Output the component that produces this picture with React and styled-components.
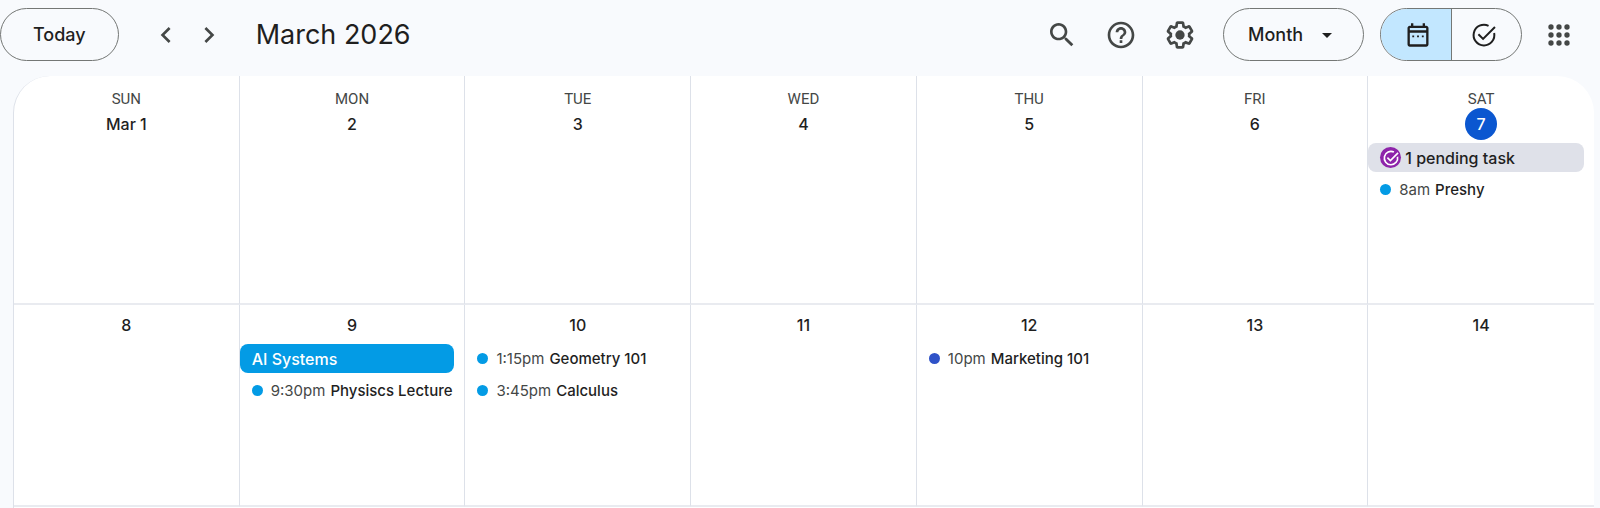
import React, { useState } from "react";
import styled, { createGlobalStyle } from "styled-components";

const weekdays = ["SUN", "MON", "TUE", "WED", "THU", "FRI", "SAT"];

const weeks = [
  [
    { id: 1, label: "Mar 1" },
    { id: 2, label: "2" },
    { id: 3, label: "3" },
    { id: 4, label: "4" },
    { id: 5, label: "5" },
    { id: 6, label: "6" },
    {
      id: 7,
      label: "7",
      today: true,
      tasks: "1 pending task",
      events: [{ time: "8am", title: "Preshy" }],
    },
  ],
  [
    { id: 8, label: "8" },
    {
      id: 9,
      label: "9",
      allDay: "AI Systems",
      events: [{ time: "9:30pm", title: "Physiscs Lecture" }],
    },
    {
      id: 10,
      label: "10",
      events: [
        { time: "1:15pm", title: "Geometry 101" },
        { time: "3:45pm", title: "Calculus" },
      ],
    },
    { id: 11, label: "11" },
    {
      id: 12,
      label: "12",
      events: [{ time: "10pm", title: "Marketing 101", color: "#2f52c8" }],
    },
    { id: 13, label: "13" },
    { id: 14, label: "14" },
  ],
];

function Icon({ size = 32, children }) {
  return (
    <svg
      width={size}
      height={size}
      viewBox="0 0 24 24"
      fill="currentColor"
      aria-hidden="true"
    >
      {children}
    </svg>
  );
}

function TaskMark({ size, weight = 1.7 }) {
  return (
    <Icon size={size}>
      <g fill="none" stroke="currentColor" strokeWidth={weight}>
        <path d="M15.9 4.1A8.9 8.9 0 1 0 20.7 10.3" />
        <path d="M7.2 11.4l4 4L21.4 5.2" />
      </g>
    </Icon>
  );
}

function Toolbar() {
  const [view, setView] = useState("month");
  const [mode, setMode] = useState("calendar");
  return (
    <Header>
      <TodayButton type="button">Today</TodayButton>
      <Arrows>
        <IconButton type="button" aria-label="Previous month">
          <Icon>
            <path d="M15.41 7.41L14 6l-6 6 6 6 1.41-1.41L10.83 12z" />
          </Icon>
        </IconButton>
        <IconButton type="button" aria-label="Next month">
          <Icon>
            <path d="M10 6L8.59 7.41 13.17 12l-4.58 4.59L10 18l6-6z" />
          </Icon>
        </IconButton>
      </Arrows>
      <Title>March 2026</Title>
      <Tools>
        <IconButton type="button" aria-label="Search">
          <Icon>
            <path d="M15.5 14h-.79l-.28-.27C15.41 12.59 16 11.11 16 9.5 16 5.91 13.09 3 9.5 3S3 5.91 3 9.5 5.91 16 9.5 16c1.61 0 3.09-.59 4.23-1.57l.27.28v.79l5 4.99L20.49 19l-4.99-5zm-6 0C7.01 14 5 11.99 5 9.5S7.01 5 9.5 5 14 7.01 14 9.5 11.99 14 9.5 14z" />
          </Icon>
        </IconButton>
        <IconButton type="button" aria-label="Support">
          <Icon>
            <path d="M11 18h2v-2h-2v2zm1-16C6.48 2 2 6.48 2 12s4.48 10 10 10 10-4.48 10-10S17.52 2 12 2zm0 18c-4.41 0-8-3.59-8-8s3.59-8 8-8 8 3.59 8 8-3.59 8-8 8zm0-14c-2.21 0-4 1.79-4 4h2c0-1.1.9-2 2-2s2 .9 2 2c0 2-3 1.75-3 5h2c0-2.25 3-2.5 3-5 0-2.21-1.79-4-4-4z" />
          </Icon>
        </IconButton>
        <IconButton type="button" aria-label="Settings">
          <Icon>
            <path d="M13.85 22.25h-3.7c-.74 0-1.36-.54-1.45-1.27l-.27-1.89c-.27-.14-.53-.29-.79-.46l-1.8.72c-.7.26-1.47-.03-1.81-.65L2.2 15.53c-.35-.66-.2-1.44.36-1.88l1.53-1.19c-.01-.15-.02-.3-.02-.46 0-.15.01-.31.02-.46l-1.52-1.19c-.59-.45-.74-1.26-.37-1.88l1.85-3.19c.34-.62 1.11-.9 1.79-.63l1.81.73c.26-.17.52-.32.78-.46l.27-1.91c.09-.7.71-1.25 1.44-1.25h3.7c.74 0 1.36.54 1.45 1.27l.27 1.89c.27.14.53.29.79.46l1.8-.72c.71-.26 1.48.03 1.82.65l1.84 3.18c.36.66.2 1.44-.36 1.88l-1.52 1.19c.01.15.02.3.02.46s-.01.31-.02.46l1.52 1.19c.56.45.72 1.23.37 1.86l-1.86 3.22c-.34.62-1.11.9-1.8.63l-1.8-.72c-.26.17-.52.32-.78.46l-.27 1.91c-.1.68-.72 1.22-1.46 1.22zm-3.23-2h2.76l.37-2.55.53-.22c.44-.18.88-.44 1.34-.78l.45-.34 2.38.96 1.38-2.4-2.03-1.58.07-.56c.03-.26.06-.51.06-.78s-.03-.53-.06-.78l-.07-.56 2.03-1.58-1.39-2.4-2.39.96-.45-.35c-.42-.32-.87-.58-1.33-.77l-.52-.22-.37-2.55h-2.76l-.37 2.55-.53.21c-.44.19-.88.44-1.34.79l-.45.33-2.38-.95-1.39 2.39 2.03 1.58-.07.56a7 7 0 0 0-.06.79c0 .26.02.53.06.78l.07.56-2.03 1.58 1.38 2.4 2.39-.96.45.35c.43.33.86.58 1.33.77l.53.22.38 2.55z" />
            <circle cx="12" cy="12" r="3.5" />
          </Icon>
        </IconButton>
      </Tools>
      <ViewPicker>
        <select
          aria-label="View"
          value={view}
          onChange={(e) => setView(e.target.value)}
        >
          <option value="day">Day</option>
          <option value="week">Week</option>
          <option value="month">Month</option>
          <option value="year">Year</option>
        </select>
        <Icon size={24}>
          <path d="M7 10l5 5 5-5z" />
        </Icon>
      </ViewPicker>
      <ModeSwitch>
        <ModeButton
          type="button"
          aria-label="Calendar"
          aria-pressed={mode === "calendar"}
          $active={mode === "calendar"}
          onClick={() => setMode("calendar")}
        >
          <Icon size={28}>
            <path d="M19 4h-1V2h-2v2H8V2H6v2H5c-1.11 0-2 .9-2 2v14c0 1.1.89 2 2 2h14c1.1 0 2-.9 2-2V6c0-1.1-.9-2-2-2zm0 16H5V10h14v10zm0-12H5V6h14v2zM8.7 14H7.1v-1.6h1.6V14zm4.1 0h-1.6v-1.6h1.6V14zm4.1 0h-1.6v-1.6h1.6V14z" />
          </Icon>
        </ModeButton>
        <ModeButton
          type="button"
          aria-label="Tasks"
          aria-pressed={mode === "tasks"}
          $active={mode === "tasks"}
          onClick={() => setMode("tasks")}
        >
          <TaskMark size={28} />
        </ModeButton>
      </ModeSwitch>
      <IconButton type="button" aria-label="Apps">
        <Icon>
          {[6, 12, 18].map((y) =>
            [6, 12, 18].map((x) => (
              <circle key={`${x}-${y}`} cx={x} cy={y} r="2" />
            ))
          )}
        </Icon>
      </IconButton>
    </Header>
  );
}

function Day({ day }) {
  const { label, today, tasks, allDay, events = [] } = day;
  return (
    <>
      <DayNumber $today={today}>
        <span>{label}</span>
      </DayNumber>
      <Events>
        {tasks && (
          <Chip type="button" $tasks>
            <TaskBadge>
              <TaskMark size={18} weight={2.2} />
            </TaskBadge>
            {tasks}
          </Chip>
        )}
        {allDay && <Chip type="button">{allDay}</Chip>}
        {events.map((event) => (
          <EventButton type="button" key={event.title}>
            <Dot $color={event.color} />
            <EventText>
              <time>{event.time}</time> {event.title}
            </EventText>
          </EventButton>
        ))}
      </Events>
    </>
  );
}

export default function App() {
  return (
    <Page>
      <GlobalStyle />
      <Toolbar />
      <Board>
        <Month aria-label="March 2026">
          <thead>
            <tr>
              {weekdays.map((name) => (
                <th key={name} scope="col">
                  {name}
                </th>
              ))}
            </tr>
          </thead>
          <tbody>
            {weeks.map((week) => (
              <tr key={week[0].id}>
                {week.map((day) => (
                  <td key={day.id}>
                    <Day day={day} />
                  </td>
                ))}
              </tr>
            ))}
          </tbody>
        </Month>
      </Board>
    </Page>
  );
}

const GlobalStyle = createGlobalStyle`
  * {
    box-sizing: border-box;
  }
  body {
    margin: 0;
    background-color: #f8fafd;
    color: #1f1f1f;
    font-family: Inter, Roboto, "Liberation Sans", sans-serif;
  }
  button,
  select {
    margin: 0;
    padding: 0;
    border: none;
    background: none;
    color: inherit;
    font: inherit;
    cursor: pointer;
  }
`;

const Page = styled.div`
  display: flex;
  flex-direction: column;
  min-height: 100vh;
`;

const Header = styled.header`
  display: flex;
  align-items: center;
  padding: 8px 25px 15px 0;
`;

const TodayButton = styled.button`
  height: 53px;
  padding: 0 32px;
  border: 1px solid #747775;
  border-radius: 27px;
  font-size: 18px;
  font-weight: 500;
`;

const IconButton = styled.button`
  display: flex;
  color: #444746;
`;

const Arrows = styled.div`
  display: flex;
  gap: 11px;
  margin: 0 31px;
`;

const Title = styled.h1`
  margin: 0;
  font-size: 27px;
  font-weight: 400;
  line-height: 36px;
`;

const Tools = styled.div`
  display: flex;
  gap: 27px;
  margin: 0 27px 0 auto;
`;

const ViewPicker = styled.div`
  display: grid;
  align-items: center;
  margin-right: 16px;
  select {
    grid-area: 1 / 1;
    width: 141px;
    height: 53px;
    padding: 0 48px 0 24px;
    border: 1px solid #747775;
    border-radius: 27px;
    appearance: none;
    font-size: 18px;
    font-weight: 500;
  }
  svg {
    grid-area: 1 / 1;
    justify-self: end;
    margin-right: 25px;
    pointer-events: none;
  }
`;

const ModeSwitch = styled.div`
  display: flex;
  width: 142px;
  height: 53px;
  margin-right: 21px;
  border: 1px solid #747775;
  border-radius: 27px;
  overflow: hidden;
`;

const ModeButton = styled.button`
  display: flex;
  flex: 1;
  align-items: center;
  justify-content: center;
  padding-left: 4px;
  background-color: ${({ $active }) => ($active ? "#c2e7ff" : "transparent")};
  & + & {
    padding: 0 4px 0 0;
    border-left: 1px solid #747775;
  }
`;

const Board = styled.main`
  flex: 1;
  margin: 0 6px 0 13px;
  border-left: 1px solid #dde1e9;
  border-radius: 37px 37px 0 0;
  background-color: #ffffff;
  overflow: hidden;
`;

const Month = styled.table`
  width: 100%;
  table-layout: fixed;
  border-spacing: 0;
  th,
  td {
    padding: 0;
    border-right: 1px solid #dde1e9;
    vertical-align: top;
  }
  th {
    padding-top: 14px;
    color: #444746;
    font-family: Roboto, sans-serif;
    font-size: 15px;
    font-weight: 400;
    line-height: 18px;
  }
  td {
    height: 197px;
    border-bottom: 2px solid #e9ebf0;
  }
  tr + tr td {
    height: 202px;
    padding-top: 4px;
  }
  th:last-child,
  td:last-child {
    border-right: none;
  }
`;

const DayNumber = styled.div`
  display: flex;
  justify-content: center;
  font-size: 16px;
  font-weight: 500;
  line-height: 32px;
  text-align: center;
  span {
    min-width: 32px;
    border-radius: 16px;
    background-color: ${({ $today }) => ($today ? "#0b57d0" : "transparent")};
    color: ${({ $today }) => ($today ? "#ffffff" : "inherit")};
  }
`;

const Events = styled.div`
  display: flex;
  flex-direction: column;
  gap: 3px;
  padding: 3px 10px 0 0;
`;

const Chip = styled.button`
  display: flex;
  align-items: center;
  gap: 4px;
  height: 29px;
  padding: 0 12px;
  border-radius: 8px;
  background-color: ${({ $tasks }) => ($tasks ? "#dfe1e9" : "#039be5")};
  color: ${({ $tasks }) => ($tasks ? "#1f1f1f" : "#ffffff")};
  font-size: 16px;
  font-weight: 500;
`;

const TaskBadge = styled.span`
  display: flex;
  align-items: center;
  justify-content: center;
  width: 21px;
  height: 21px;
  border-radius: 50%;
  background-color: #8e24aa;
  color: #ffffff;
`;

const EventButton = styled.button`
  display: flex;
  align-items: center;
  gap: 8px;
  height: 29px;
  padding-left: 12px;
  font-size: 15px;
  font-weight: 500;
`;

const Dot = styled.span`
  flex: none;
  width: 11px;
  height: 11px;
  border-radius: 50%;
  background-color: ${({ $color }) => $color || "#039be5"};
`;

const EventText = styled.span`
  overflow: hidden;
  white-space: nowrap;
  time {
    margin-right: 1px;
    color: #444746;
    font-weight: 400;
  }
`;
